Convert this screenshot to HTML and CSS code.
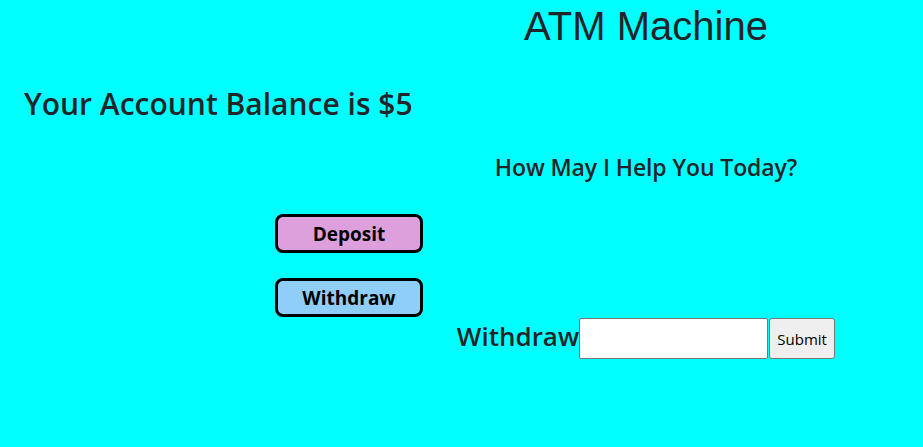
FILE: index.html
```html
<!DOCTYPE html>
<html lang="en">
<head>
<meta charset="utf-8">
<title>ATM Machine</title>
<link rel="stylesheet" href="styles.css">
</head>
<body>
<div class="page">
  <h1 class="title">ATM Machine</h1>
  <h2 class="balance">Your Account Balance is $5</h2>
  <h4 class="prompt">How May I Help You Today?</h4>
  <div class="actions first">
    <button class="action deposit">Deposit</button>
  </div>
  <div class="actions second">
    <button class="action withdraw">Withdraw</button>
  </div>
  <form class="txn">
    <label class="txn-label" for="amount">Withdraw</label>
    <input class="txn-input" id="amount" type="text">
    <button class="txn-submit" type="button">Submit</button>
  </form>
</div>
</body>
</html>
```

FILE: styles.css
```css
html, body {
  margin: 0;
  padding: 0;
}
body {
  background: #00ffff;
  color: #212529;
  font-family: "Open Sans", "Noto Sans", sans-serif;
  width: 923px;
  height: 447px;
  overflow: hidden;
}
.page {
  display: grid;
  grid-template-columns: 432px 428px;
}
.title {
  grid-column: 2;
  grid-row: 1;
  margin: 3px 0 0;
  text-align: center;
  font-family: "Liberation Sans", Arial, sans-serif;
  font-weight: 400;
  font-size: 40px;
  line-height: 46px;
}
.balance {
  grid-column: 1;
  grid-row: 2;
  margin: 36px 0 0;
  padding-left: 24px;
  font-size: 30px;
  font-weight: 600;
  line-height: 38px;
  letter-spacing: 0;
  white-space: nowrap;
}
.prompt {
  grid-column: 2;
  grid-row: 3;
  margin: 30px 0 0;
  text-align: center;
  font-size: 23px;
  font-weight: 600;
  line-height: 29px;
  letter-spacing: -0.1px;
}
.actions {
  grid-column: 1;
  display: flex;
  justify-content: flex-end;
  padding-right: 9px;
}
.actions.first {
  grid-row: 4;
  margin-top: 32px;
}
.actions.second {
  grid-row: 5;
  margin-top: 25px;
}
.action {
  box-sizing: border-box;
  width: 148px;
  height: 39px;
  border: 3px solid #000;
  border-radius: 8px;
  font-family: "Open Sans", "Noto Sans", sans-serif;
  font-weight: 700;
  font-size: 19px;
  color: #000;
  padding: 0;
}
.deposit {
  background: #dda0dd;
}
.withdraw {
  background: #90cefa;
}
.txn {
  grid-column: 2;
  grid-row: 6;
  margin: 1px 0 0;
  display: flex;
  justify-content: center;
  align-items: center;
  height: 41px;
}
.txn-label {
  font-size: 26px;
  font-weight: 600;
  line-height: 32px;
  margin-bottom: 6px;
}
.txn-input {
  box-sizing: border-box;
  width: 189px;
  height: 41px;
  margin: 0;
  border: 1px solid #767676;
  border-radius: 2px;
  background: #fff;
}
.txn-submit {
  box-sizing: border-box;
  width: 66px;
  height: 41px;
  margin: 0 0 0 1px;
  border: 1px solid #767676;
  border-radius: 3px;
  background: #efefef;
  color: #000;
  font-family: "Open Sans", "Noto Sans", sans-serif;
  font-size: 15px;
  padding: 0;
}
```
